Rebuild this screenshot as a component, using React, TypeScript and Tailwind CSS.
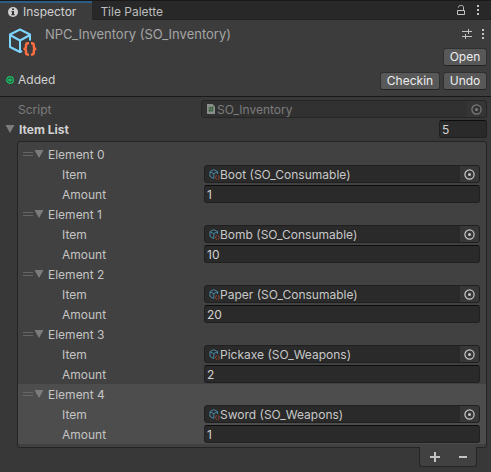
import { useState } from "react";
import type { ReactNode } from "react";

type Item = { id: number; name: string; amount: number };

const initialItems: Item[] = [
  { id: 0, name: "Boot (SO_Consumable)", amount: 1 },
  { id: 1, name: "Bomb (SO_Consumable)", amount: 10 },
  { id: 2, name: "Paper (SO_Consumable)", amount: 20 },
  { id: 3, name: "Pickaxe (SO_Weapons)", amount: 2 },
  { id: 4, name: "Sword (SO_Weapons)", amount: 1 },
];

function InfoIcon() {
  return (
    <svg width="10" height="10" viewBox="0 0 10 10" aria-hidden="true">
      <circle cx="5" cy="5" r="5" fill="#d2d2d2" />
      <path d="M4 1.6h2v1.5H4zM3.500 4H6v3.200h.8v1H3.300v-1H4V5h-.5z" fill="#333" />
    </svg>
  );
}

function LockIcon() {
  return (
    <svg width="8" height="10" viewBox="0 0 8 10" fill="none" stroke="#c4c4c4" aria-hidden="true">
      <path d="M.5 5.500h7v4h-7z" />
      <path d="M1.500 2.500V2C1.500 1 2.500.5 3.500.5h1c1 0 2 .7 2 1.700v3.300" />
    </svg>
  );
}

function DotsIcon() {
  return (
    <svg width="2" height="10" viewBox="0 0 2 10" fill="#c4c4c4" aria-hidden="true">
      <path d="M0 0h2v2H0zM0 4h2v2H0zM0 8h2v2H0z" />
    </svg>
  );
}

function PresetIcon() {
  return (
    <svg width="10" height="10" viewBox="0 0 10 10" fill="#c4c4c4" aria-hidden="true">
      <path d="M0 2h6V0h1v2h3v1H7v2H6V3H0zM0 7h3V5h1v2h6v1H4v2H3V8H0z" />
    </svg>
  );
}

function AssetIcon() {
  return (
    <svg width="28" height="28" viewBox="0 0 28 28" fill="none" aria-hidden="true">
      <g stroke="#7fd6fd" strokeWidth="2" strokeLinejoin="round">
        <path d="M21 12.500V6.500L11 1.500 1 6.500v12.500l10 5 2-1" />
        <path d="M1 7l10 5.500L21 7M11 12.500V24" />
      </g>
      <g stroke="#ff6e40" strokeWidth="2.400">
        <path d="M20 15.200h-1c-1.300 0-2 .7-2 2v1.600c0 1.200-.6 2.100-2.500 2.100 1.900 0 2.500.9 2.500 2.100v1.600c0 1.300.7 2 2 2h1" />
        <path d="M22 15.200h.8c1.300 0 2 .7 2 2v1.600c0 1.200.6 2.100 2.500 2.100-1.900 0-2.500.9-2.500 2.100v1.600c0 1.300-.7 2-2 2H22" />
      </g>
    </svg>
  );
}

function SmallAssetIcon() {
  return (
    <svg width="11" height="11" viewBox="0 0 11 11" fill="none" aria-hidden="true">
      <path d="M8.500 5V2.500L4.800.7 1 2.500v5L4.800 9.500M1 2.800l3.800 1.800 3.700-1.800M4.800 4.600v4.900" stroke="#4a87a3" />
      <path d="M7.800 6.500c-1 0-.6 1.500-1.300 2 .7.400.3 2 1.300 2M9 6.500c1 0 .6 1.500 1.300 2-.7.400-.3 2-1.300 2" stroke="#a04a33" />
    </svg>
  );
}

function ScriptIcon() {
  return (
    <svg width="11" height="10" viewBox="0 0 11 10" aria-hidden="true">
      <path d="M1 0h5.500L9 2.500V10H1z" fill="#8b8f8b" />
      <path d="M4.300 2.500l-.6 5.500M6.600 2.500L6 8M2.500 4h5M2.300 6.300h5" stroke="#34603a" fill="none" />
    </svg>
  );
}

function AddedIcon() {
  return (
    <svg width="8" height="8" viewBox="0 0 8 8" fill="none" stroke="#16c464" aria-hidden="true">
      <circle cx="4" cy="4" r="3.300" strokeWidth="1.300" />
      <path d="M4 2v4M2 4h4" strokeWidth="1.300" />
    </svg>
  );
}

function TargetIcon() {
  return (
    <svg width="11" height="11" viewBox="0 0 11 11" fill="none" aria-hidden="true">
      <circle cx="5.500" cy="5.500" r="4.600" stroke="currentColor" strokeWidth="1.200" />
      <circle cx="5.500" cy="5.500" r="1.500" fill="currentColor" />
    </svg>
  );
}

function Foldout({ open, onToggle, children }: { open: boolean; onToggle: () => void; children: ReactNode }) {
  return (
    <button type="button" aria-expanded={open} onClick={onToggle} className="flex h-[18px] items-center gap-1">
      <svg
        width="10"
        height="8"
        viewBox="0 0 10 8"
        fill="#7c7c7c"
        aria-hidden="true"
        className={open ? "" : "-rotate-90"}
      >
        <path d="M.5 0h9L5 8z" />
      </svg>
      <span className="pt-[2px]">{children}</span>
    </button>
  );
}

function HeaderButton({ wide = false, children }: { wide?: boolean; children: ReactNode }) {
  return (
    <button
      type="button"
      className={`${wide ? "w-[60px]" : "w-11"} flex h-[18px] items-center justify-center rounded-[3px] border border-[#303030] border-b-[#242424] bg-[#585858] text-[#eeeeee] hover:bg-[#676767]`}
    >
      {children}
    </button>
  );
}

function ObjectField({ id, value, icon, disabled = false }: { id: string; value: string; icon: ReactNode; disabled?: boolean }) {
  return (
    <div
      className={
        disabled
          ? "flex h-[18px] min-w-0 flex-1 items-center rounded-[3px] border border-[#262626] bg-[#313131] pl-1 text-[#7c7c7c]"
          : "flex h-[18px] min-w-0 flex-1 items-center rounded-[3px] border border-[#202020] bg-[#2a2a2a] pl-1 text-[#c8c8c8]"
      }
    >
      {icon}
      <input
        id={id}
        readOnly
        disabled={disabled}
        defaultValue={value}
        className="h-4 min-w-0 flex-1 bg-transparent pt-px outline-none"
      />
      <button
        type="button"
        disabled={disabled}
        aria-label="Select object"
        className={
          disabled
            ? "flex h-4 w-[19px] items-center justify-center rounded-r-[2px] bg-[#353535]"
            : "flex h-4 w-[19px] items-center justify-center rounded-r-[2px] bg-[#373737]"
        }
      >
        <TargetIcon />
      </button>
    </div>
  );
}

const numberField =
  "h-[18px] min-w-0 rounded-[3px] border border-[#202020] border-t-[#0d0d0d] bg-[#2a2a2a] px-[2px] pt-px text-[#d2d2d2] outline-none focus:border-[#3a79bb]";

function ItemElement({ item, selected, onSelect }: { item: Item; selected: boolean; onSelect: () => void }) {
  const [open, setOpen] = useState(true);
  return (
    <li
      onClick={onSelect}
      className={selected ? "flex flex-col gap-[2px] bg-[#4d4d4d] py-px pr-[6px]" : "flex flex-col gap-[2px] py-px pr-[6px]"}
    >
      <div className="flex items-center gap-px pl-[5px]">
        <span className="h-1 w-[10px] border-y border-[#666666]" />
        <Foldout open={open} onToggle={() => setOpen(!open)}>
          Element {item.id}
        </Foldout>
      </div>
      {open && (
        <>
          <div className="flex items-center pl-11">
            <label htmlFor={`item-${item.id}`} className="w-[142px] pt-[2px]">
              Item
            </label>
            <ObjectField id={`item-${item.id}`} value={item.name} icon={<SmallAssetIcon />} />
          </div>
          <div className="flex items-center pl-11">
            <label htmlFor={`amount-${item.id}`} className="w-[142px] pt-[2px]">
              Amount
            </label>
            <input id={`amount-${item.id}`} defaultValue={item.amount} inputMode="numeric" className={`${numberField} flex-1`} />
          </div>
        </>
      )}
    </li>
  );
}

export default function App() {
  const [items, setItems] = useState(initialItems);
  const [selected, setSelected] = useState(4);
  const [open, setOpen] = useState(true);

  const addItem = () => setItems([...items, { ...items[items.length - 1], id: items.length }]);
  const removeItem = () => items.length > 1 && setItems(items.slice(0, -1));

  return (
    <main className="min-h-screen bg-[#383838] font-['Inter',sans-serif] text-[12px] leading-4 text-[#c4c4c4]">
      <nav className="flex h-5 items-stretch border-t border-[#191919] bg-[#282828]">
        <button type="button" className="flex items-center gap-[5px] border-t-2 border-[#2c5d87] bg-[#3c3c3c] pr-4 pl-2 text-[#d2d2d2]">
          <InfoIcon />
          Inspector
        </button>
        <button type="button" className="flex flex-1 items-center border-b border-[#232323] pt-[3px] pl-2 text-[#bdbdbd]">
          Tile Palette
        </button>
        <div className="flex items-center gap-3 border-b border-[#232323] pr-3">
          <button type="button" aria-label="Lock inspector">
            <LockIcon />
          </button>
          <button type="button" aria-label="Window menu">
            <DotsIcon />
          </button>
        </div>
      </nav>

      <header className="flex flex-col border-b border-[#1a1a1a] bg-[#3c3c3c] pt-1 pr-1 pb-[6px] pl-[6px]">
        <div className="flex items-start">
          <div className="pt-1 pl-[3px]">
            <AssetIcon />
          </div>
          <h1 className="flex-1 pt-[2px] pl-2 text-[13px] text-[#a5a5a5]">NPC_Inventory (SO_Inventory)</h1>
          <div className="flex flex-col items-end gap-1">
            <div className="flex h-5 items-center gap-[10px] pr-[3px]">
              <button type="button" aria-label="Presets">
                <PresetIcon />
              </button>
              <button type="button" aria-label="Component menu">
                <DotsIcon />
              </button>
            </div>
            <HeaderButton>Open</HeaderButton>
          </div>
        </div>
        <div className="flex items-start gap-[3px] pt-[6px]">
          <p className="flex flex-1 items-center gap-1 text-[#d2d2d2]">
            <AddedIcon />
            Added
          </p>
          <HeaderButton wide>Checkin</HeaderButton>
          <HeaderButton>Undo</HeaderButton>
        </div>
      </header>

      <section className="flex flex-col gap-[2px] pt-[3px] pr-1">
        <div className="flex items-center pl-[18px]">
          <label htmlFor="script" className="w-[183px] pt-[2px] text-[#7c7c7c]">
            Script
          </label>
          <ObjectField id="script" value="SO_Inventory" icon={<ScriptIcon />} disabled />
        </div>
        <div className="flex items-center justify-between pl-[5px]">
          <Foldout open={open} onToggle={() => setOpen(!open)}>
            <span className="font-bold text-[#d2d2d2]">Item List</span>
          </Foldout>
          <input aria-label="Item List size" key={items.length} defaultValue={items.length} inputMode="numeric" className={`${numberField} w-12`} />
        </div>
        {open && (
          <div className="flex flex-col items-end pl-[17px]">
            <ul className="mt-px w-full rounded-[3px] border border-[#242424] bg-[#414141] pt-[2px] pb-[3px]">
              {items.map((item) => (
                <ItemElement key={item.id} item={item} selected={item.id === selected} onSelect={() => setSelected(item.id)} />
              ))}
            </ul>
            <div className="-mt-px mr-[10px] flex h-5 w-[58px] items-center justify-around rounded-b-[3px] border border-t-0 border-[#242424] bg-[#414141]">
              <button type="button" aria-label="Add element" onClick={addItem}>
                <svg width="10" height="10" viewBox="0 0 10 10" aria-hidden="true">
                  <path d="M4 0h2v4h4v2H6v4H4V6H0V4h4z" fill="#c4c4c4" />
                </svg>
              </button>
              <button type="button" aria-label="Remove element" onClick={removeItem}>
                <svg width="8" height="10" viewBox="0 0 8 10" aria-hidden="true">
                  <path d="M0 4h8v2H0z" fill="#c4c4c4" />
                </svg>
              </button>
            </div>
          </div>
        )}
      </section>
    </main>
  );
}
